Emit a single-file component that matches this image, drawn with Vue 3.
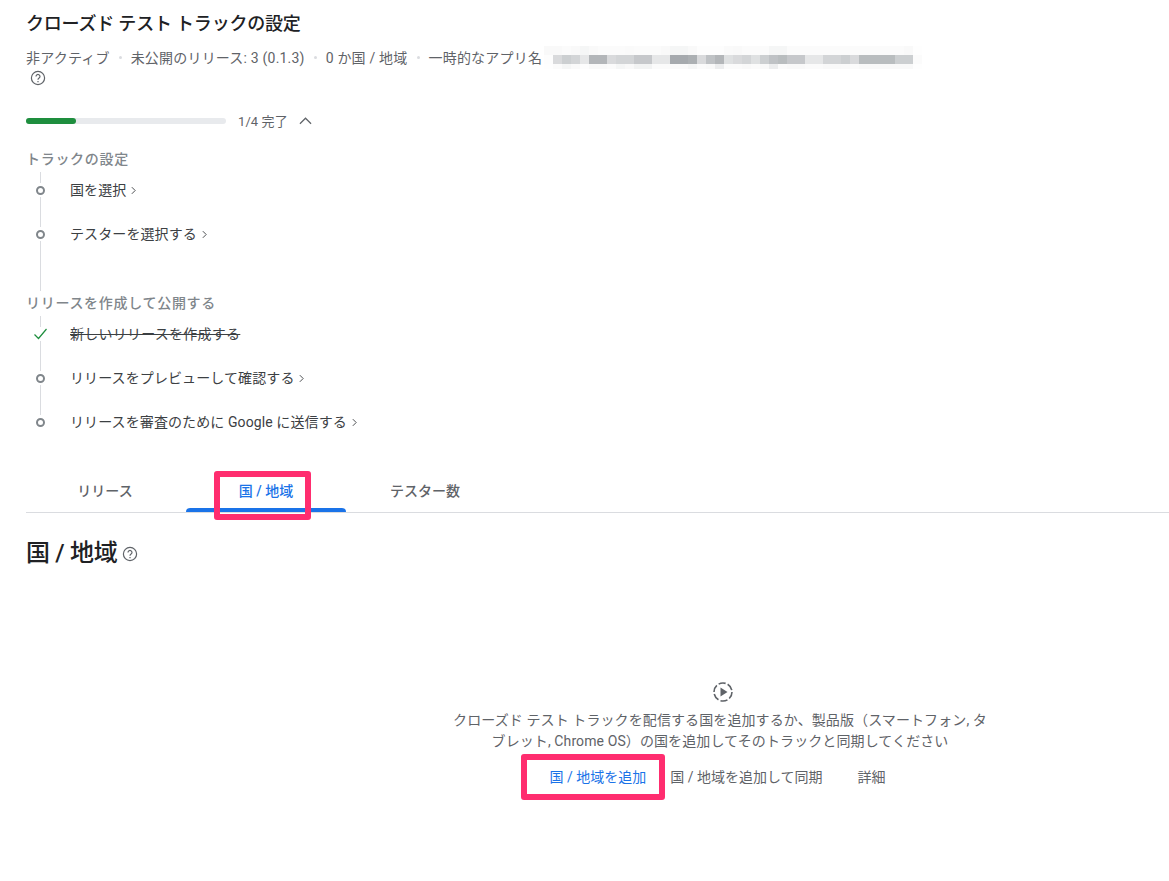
<template>
  <div class="page">
    <h1 class="title">クローズド テスト トラックの設定</h1>
    <div class="meta">
      <span>非アクティブ</span>
      <i class="dot"></i>
      <span>未公開のリリース: 3 (0.1.3)</span>
      <i class="dot"></i>
      <span>0 か国 / 地域</span>
      <i class="dot"></i>
      <span>一時的なアプリ名</span>
      <div class="blur">
        <div v-for="(row, r) in blurRows" :key="r" class="blur-row">
          <b v-for="(v, i) in row" :key="i" :style="{ opacity: v }"></b>
        </div>
      </div>
    </div>
    <svg class="help help-meta" viewBox="0 0 16 16"><circle cx="8" cy="8" r="6.6" /><path d="M6 6.4a2 2 0 1 1 3.1 1.7c-.7.5-1.1.8-1.1 1.6" /><path d="M8 11v1.2" /></svg>

    <div class="progress">
      <div class="bar"><div class="bar-fill"></div></div>
      <span class="progress-text">1/4 完了</span>
      <svg class="chev-up" viewBox="0 0 14 8"><path d="M1 7l6-6 6 6" /></svg>
    </div>

    <div class="section">
      <div class="section-head">トラックの設定</div>
      <div class="steps first-steps">
        <div v-for="s in setupSteps" :key="s" class="step">
          <span class="marker"><i class="ring"></i></span>
          <span class="step-label">{{ s }}</span>
          <svg class="chev" viewBox="0 0 6 10"><path d="M1 1l4 4-4 4" /></svg>
        </div>
      </div>
    </div>

    <div class="section">
      <div class="section-head">リリースを作成して公開する</div>
      <div class="steps last-steps">
        <div class="step">
          <span class="marker">
            <svg class="check" viewBox="0 0 14 12"><path d="M1 6.5l4 4L13 1" /></svg>
          </span>
          <span class="step-label done">新しいリリースを作成する</span>
        </div>
        <div v-for="s in releaseSteps" :key="s" class="step">
          <span class="marker"><i class="ring"></i></span>
          <span class="step-label">{{ s }}</span>
          <svg class="chev" viewBox="0 0 6 10"><path d="M1 1l4 4-4 4" /></svg>
        </div>
      </div>
    </div>

    <div class="tabs">
      <div class="tab">リリース</div>
      <div class="tab active">
        国 / 地域
        <span class="mark mark-tab"></span>
      </div>
      <div class="tab">テスター数</div>
    </div>

    <div class="heading">
      <h2>国 / 地域</h2>
      <svg class="help" viewBox="0 0 16 16"><circle cx="8" cy="8" r="6.6" /><path d="M6 6.4a2 2 0 1 1 3.1 1.7c-.7.5-1.1.8-1.1 1.6" /><path d="M8 11v1.2" /></svg>
    </div>

    <div class="empty">
      <svg class="play" viewBox="0 0 22 22">
        <circle cx="11" cy="11" r="9" stroke-dasharray="7.2 2.2" />
        <path class="play-tri" d="M8.5 6.5l7 4.5-7 4.5z" />
      </svg>
      <p>クローズド テスト トラックを配信する国を追加するか、製品版（スマートフォン, タブレット, Chrome OS）の国を追加してそのトラックと同期してください</p>
      <div class="actions">
        <span class="action primary">
          国 / 地域を追加
          <span class="mark mark-add"></span>
        </span>
        <span class="action">国 / 地域を追加して同期</span>
        <span class="action last">詳細</span>
      </div>
    </div>
  </div>
</template>

<script setup>
const setupSteps = ['国を選択', 'テスターを選択する']
const releaseSteps = ['リリースをプレビューして確認する', 'リリースを審査のために Google に送信する']

// pixelated strip that hides the app name
const blurRows = [
  [0.05, 0.05, 0.03, 0.05, 0.08, 0.05, 0.03, 0.03, 0.03, 0.04, 0.03, 0.03, 0.03, 0.05, 0.08, 0.08, 0.05, 0.02, 0.02, 0.02, 0.04, 0.05, 0.03, 0.03, 0.03, 0.08, 0.08, 0.03, 0.03, 0.03, 0.03, 0.03, 0.03, 0.03, 0.03, 0.03, 0.03, 0.03, 0.03, 0.03, 0.05, 0.01],
  [0.02, 0.3, 0.4, 0.35, 0.2, 0.6, 0.6, 0.3, 0.35, 0.35, 0.45, 0.45, 0.2, 0.2, 0.7, 0.7, 0.65, 0.3, 0.5, 0.6, 0.25, 0.3, 0.35, 0.25, 0.4, 0.5, 0.55, 0.45, 0.45, 0.2, 0.2, 0.35, 0.35, 0.4, 0.3, 0.55, 0.55, 0.55, 0.55, 0.4, 0.4, 0.03],
  [0.01, 0.03, 0.08, 0.04, 0.02, 0.05, 0.05, 0.03, 0.08, 0.05, 0.1, 0.1, 0.03, 0.03, 0.04, 0.04, 0.08, 0.03, 0.05, 0.15, 0.03, 0.03, 0.05, 0.03, 0.05, 0.15, 0.03, 0.05, 0.05, 0.03, 0.03, 0.05, 0.05, 0.04, 0.03, 0.05, 0.05, 0.05, 0.05, 0.05, 0.05, 0.01]
]
</script>

<style>
html, body {
  background: #fff;
}
</style>

<style scoped>
.page {
  box-sizing: border-box;
  width: 1169px;
  height: 881px;
  overflow: hidden;
  padding: 13px 0 0 26px;
  font-family: Roboto, "Noto Sans CJK JP", sans-serif;
  font-size: 14px;
  color: #5f6368;
}
.title {
  margin: 0;
  font-size: 18px;
  line-height: 21px;
  letter-spacing: -0.2px;
  font-weight: 500;
  color: #202124;
}
.meta {
  display: flex;
  align-items: center;
  margin-top: 13px;
  height: 20px;
  letter-spacing: 0.2px;
}
.dot {
  width: 3px;
  height: 3px;
  margin: 0 9px;
  border-radius: 50%;
  background: #dadce0;
}
.blur {
  margin: 0 0 0 2px;
}
.blur-row {
  display: flex;
}
.blur-row b {
  display: block;
  width: 9px;
  height: 9px;
  background: #80868b;
}
.blur-row:last-child b {
  height: 5px;
}
.help {
  width: 16px;
  height: 16px;
  fill: none;
  stroke: #5f6368;
  stroke-width: 1.2;
}
.help-meta {
  display: block;
  margin: 3px 0 0 4px;
}
.progress {
  display: flex;
  align-items: center;
  margin-top: 25px;
  height: 20px;
}
.bar {
  width: 200px;
  height: 6px;
  border-radius: 3px;
  background: #e8eaed;
}
.bar-fill {
  width: 50px;
  height: 6px;
  border-radius: 3px;
  background: #1e8e3e;
}
.progress-text {
  margin: -2px 0 0 12px;
  font-size: 13px;
  letter-spacing: 0.1px;
}
.chev-up {
  width: 13px;
  height: 8px;
  margin-left: 11px;
  fill: none;
  stroke: #5f6368;
  stroke-width: 1.3;
}
.section {
  margin-top: 18px;
}
.section + .section {
  margin-top: 2px;
}
.section-head {
  height: 20px;
  line-height: 20px;
  font-weight: 500;
  letter-spacing: 0.7px;
  color: #80868b;
}
.steps {
  box-sizing: border-box;
  margin: 3px 0 0 14px;
  border-left: 1px solid #dadce0;
  padding-top: 8px;
}
.first-steps {
  height: 119px;
}
.last-steps {
  height: 106px;
}
.step {
  display: flex;
  align-items: center;
  height: 20px;
  margin-bottom: 24px;
  letter-spacing: 0.1px;
  color: #3c4043;
}
.marker {
  display: flex;
  justify-content: center;
  align-items: center;
  width: 16px;
  height: 14px;
  margin-left: -9px;
  background: #fff;
}
.ring {
  box-sizing: border-box;
  width: 9px;
  height: 9px;
  border: 2px solid #80868b;
  border-radius: 50%;
}
.check {
  flex: none;
  width: 15px;
  height: 12px;
  fill: none;
  stroke: #1e8e3e;
  stroke-width: 1.2;
}
.step-label {
  margin: -2px 0 0 22px;
}
.done {
  text-decoration: line-through;
  letter-spacing: 0.25px;
  color: #3c4043;
}
.chev {
  width: 5px;
  height: 9px;
  margin-left: 5px;
  fill: none;
  stroke: #3c4043;
  stroke-width: 1.1;
}
.tabs {
  display: flex;
  margin-top: 50px;
  height: 40px;
  border-bottom: 1px solid #dadce0;
}
.tab {
  position: relative;
  box-sizing: border-box;
  width: 160px;
  height: 40px;
  padding-right: 2px;
  line-height: 38px;
  text-align: center;
  font-weight: 500;
  color: #5f6368;
}
.tab.active {
  padding-right: 0;
  color: #1a73e8;
}
.tab.active::after {
  content: "";
  position: absolute;
  left: 0;
  right: 0;
  bottom: 0;
  height: 4px;
  border-radius: 4px 4px 0 0;
  background: #1a73e8;
}
.mark {
  position: absolute;
  z-index: 1;
  box-sizing: border-box;
  border: 6px solid #ff2d6f;
  border-radius: 3px;
  pointer-events: none;
}
.mark-tab {
  left: 28px;
  top: -1px;
  width: 97px;
  height: 49px;
}
.heading {
  display: flex;
  align-items: center;
  gap: 4px;
  margin-top: 22px;
  height: 30px;
}
.heading h2 {
  margin: 0;
  font-size: 24px;
  letter-spacing: -0.3px;
  font-weight: 500;
  color: #202124;
}
.heading .help {
  margin-top: 8px;
}
.empty {
  display: flex;
  flex-direction: column;
  align-items: center;
  width: 540px;
  margin: 116px 0 0 424px;
}
.play {
  width: 22px;
  height: 22px;
  margin-left: 6px;
  fill: none;
  stroke: #5f6368;
  stroke-width: 1.6;
}
.play-tri {
  fill: #5f6368;
  stroke: none;
}
.empty p {
  margin: 7px 0 0;
  line-height: 21px;
  letter-spacing: 0.1px;
  text-align: center;
}
.actions {
  display: flex;
  margin-top: 15px;
  height: 20px;
  line-height: 20px;
}
.action {
  position: relative;
  margin-right: 35px;
}
.action.primary {
  color: #1a73e8;
  margin-right: 24px;
}
.action.last {
  margin-right: 5px;
}
.mark-add {
  left: -28px;
  top: -13px;
  width: 144px;
  height: 46px;
}
</style>
